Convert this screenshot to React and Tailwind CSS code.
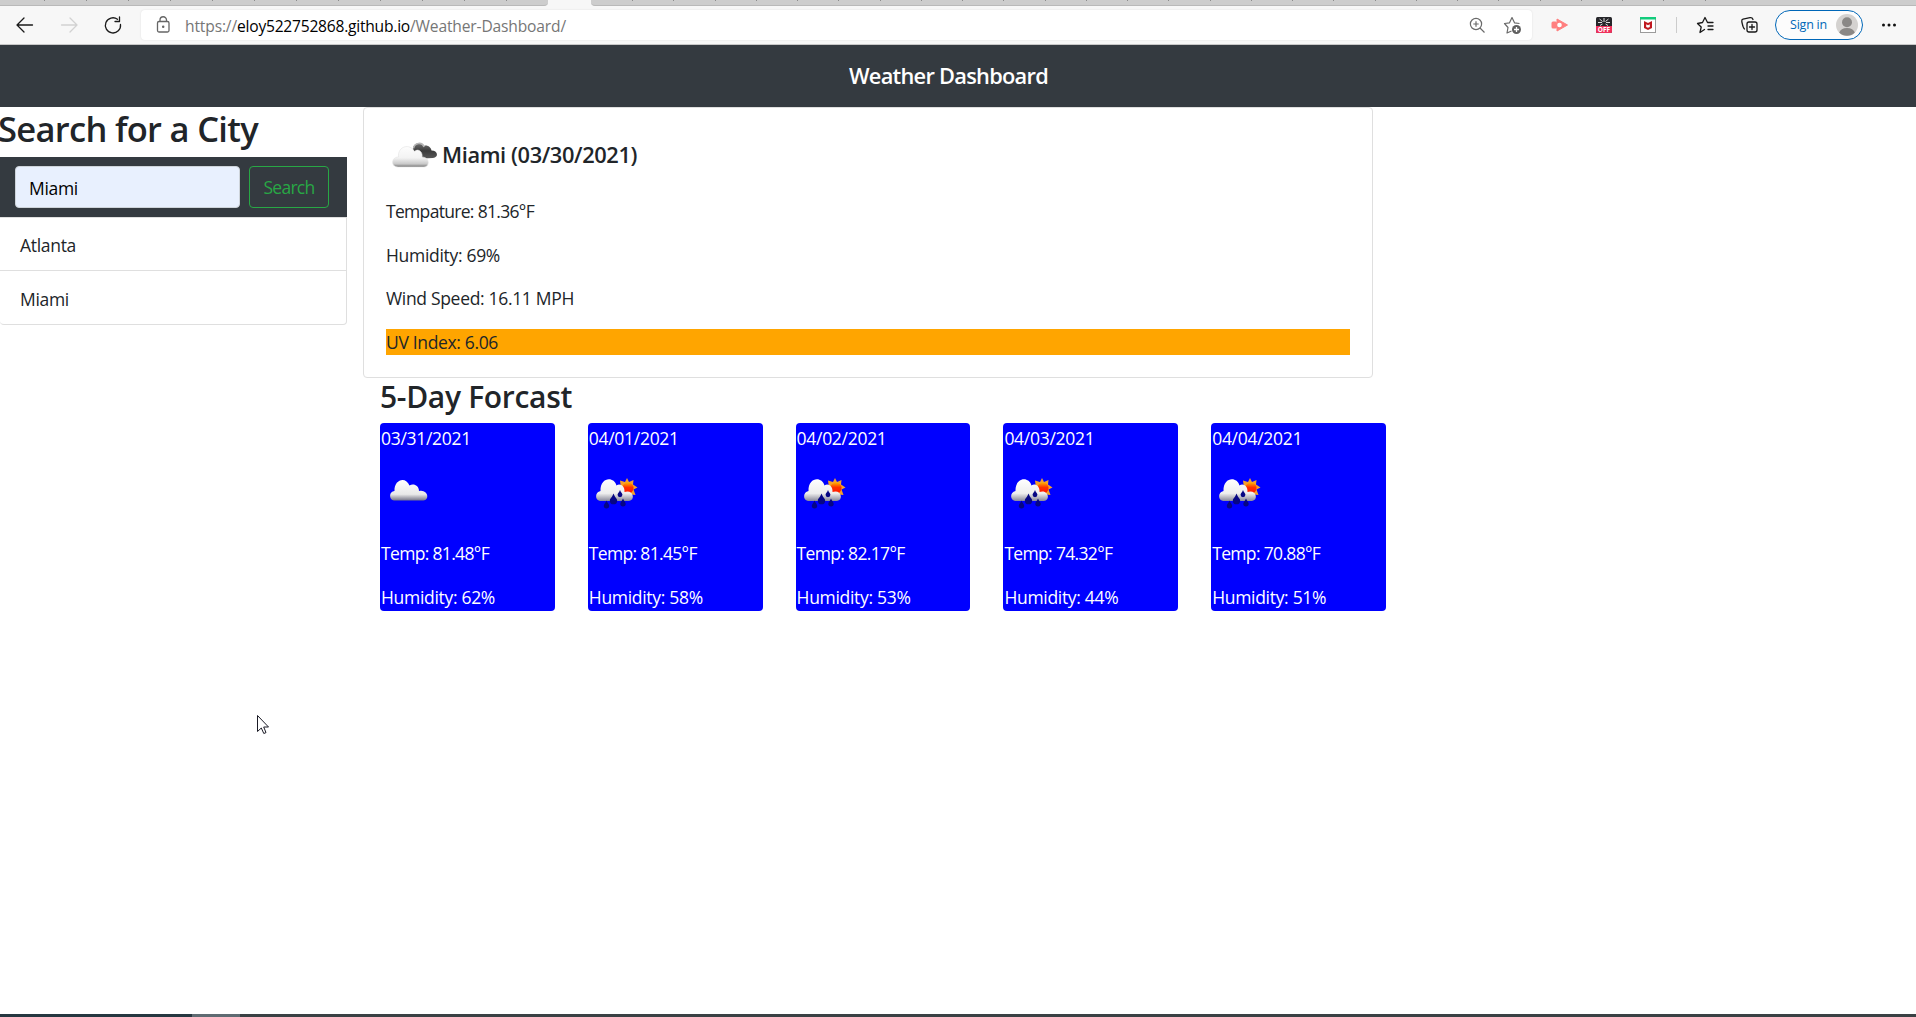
const SANS = "font-['Open_Sans','Noto_Sans',sans-serif]";

/* One line of text fitted to a given width through its letter spacing. */
function Fit({ w, children, className = "" }) {
  const fit = (el) => {
    if (!el) return;
    const apply = () => {
      el.style.letterSpacing = "0px";
      const n = el.textContent.length;
      el.style.letterSpacing = (w - el.getBoundingClientRect().width) / n + "px";
    };
    apply();
    if (document.fonts) document.fonts.ready.then(apply);
  };
  return (
    <span ref={fit} className={"inline-block whitespace-nowrap " + className}>
      {children}
    </span>
  );
}

function BrokenClouds() {
  return (
    <svg width="55" height="55" viewBox="0 0 55 55" className="shrink-0">
      <defs>
        <linearGradient id="bk" x1="0" y1="0" x2="0" y2="1">
          <stop offset="0" stopColor="#707070" />
          <stop offset="0.5" stopColor="#3c3c3c" />
          <stop offset="1" stopColor="#585858" />
        </linearGradient>
        <linearGradient id="wh" x1="0" y1="0" x2="0" y2="1">
          <stop offset="0" stopColor="#fdfdfd" />
          <stop offset="0.55" stopColor="#f3f3f3" />
          <stop offset="0.85" stopColor="#c9c9c9" />
          <stop offset="1" stopColor="#777777" />
        </linearGradient>
      </defs>
      <path d="M27 21 C26 14 35 12 38 17 C41 15.500 45 18 45.500 21.500 C52 21.500 53 28.500 47 29 L36 29.500 Z" fill="url(#bk)" />
      <path d="M27.500 19.500 C28.500 13 36.500 13 38 18" fill="none" stroke="#b5b5b5" strokeWidth="1.600" />
      <path d="M12 38 C4.500 38 5 28 12.500 28 C11.500 17 24 14 28.500 22.500 C33 18.500 37 24 36 28 C44 28 44 38 38 38 Z" fill="url(#wh)" stroke="#e2e2e2" strokeWidth="0.600" />
    </svg>
  );
}

function Cloud() {
  return (
    <svg width="55" height="55" viewBox="0 0 55 55">
      <defs>
        <linearGradient id="cl" x1="0" y1="0" x2="0" y2="1">
          <stop offset="0" stopColor="#ffffff" />
          <stop offset="0.7" stopColor="#e9e9e9" />
          <stop offset="1" stopColor="#777788" />
        </linearGradient>
      </defs>
      <path d="M13 37.500 C7.500 37 8 28 13.500 28 C13 16 25 13 28.500 22.500 C32 20 38 22 38 28 C47 26 49 37 42.500 37.500 Z" fill="url(#cl)" />
    </svg>
  );
}

function SunRain() {
  return (
    <svg width="55" height="55" viewBox="0 0 55 55">
      <defs>
        <linearGradient id="sr" x1="0" y1="0" x2="0" y2="1">
          <stop offset="0" stopColor="#ffffff" />
          <stop offset="0.65" stopColor="#eeeeee" />
          <stop offset="1" stopColor="#888899" />
        </linearGradient>
        <linearGradient id="sn" x1="0" y1="0" x2="0" y2="1">
          <stop offset="0" stopColor="#ffb400" />
          <stop offset="0.45" stopColor="#ff3000" />
          <stop offset="1" stopColor="#ff1500" />
        </linearGradient>
      </defs>
      <path d="M38 15 L40 19 L44.500 17 L44 21.500 L48.500 24.500 L44.500 26.500 L46.500 32 L42 31.500 L38 34 L35 30 L29 29 L32 25 L31 17.500 L36 19 Z" fill="#f4a12b" />
      <circle cx="39" cy="25" r="5.600" fill="url(#sn)" />
      <path d="M11 38 C5.500 37 6 29 11.500 28 C11 14 25 13 27.500 22.500 C31 20 36 23 35.500 29 C44 26 47 37 40 38 Z" fill="url(#sr)" />
      {[[17.5, 37.5, 1], [24.5, 30.5, 1.35], [31, 27, 0.9], [34, 35.500, 1]].map(([x, y, s]) => (
        <path key={x} transform={`translate(${x} ${y}) scale(${s})`} d="M0 0 C1 3 2.700 3.500 2.700 5.300 A2.700 2.700 0 0 1 -2.700 5.300 C-2.700 3.500 -1 3 0 0 Z" fill="#060684" />
      ))}
    </svg>
  );
}

function TabStrip() {
  const ticks = (n, cls) =>
    Array.from({ length: n }, (_, i) => <span key={i} className={"h-px w-px shrink-0 bg-[#8c8c8c] " + cls} />);
  return (
    <div className="flex h-[6px] shrink-0 bg-[#f7f7f7]">
      <div className="flex w-[548px] overflow-hidden rounded-br-[4px] border-b border-[#b9b9b9] bg-[#cdcdcd] pl-[44px]">{ticks(12, "mr-[41px]")}</div>
      <div className="w-[43px]" />
      <div className="flex flex-1 overflow-hidden rounded-bl-[4px] border-b border-[#b9b9b9] bg-[#cdcdcd] pl-[41px]">{ticks(27, "mr-[40.26px]")}</div>
    </div>
  );
}

function Toolbar() {
  const line = { fill: "none", stroke: "#1a1a1a", strokeWidth: 1.3, strokeLinecap: "round", strokeLinejoin: "round" };
  return (
    <div className="flex h-[39px] shrink-0 items-center border-b border-[#c8c8c8] bg-[#f7f7f7]">
      <svg width="141" height="38" viewBox="0 0 141 38">
        <g {...line}>
          <path d="M32.500 19 H17.500 M24 12 L17 19 L24 26" />
          <path d="M61.500 19 H76.500 M70 12 L77 19 L70 26" stroke="#d2d2d2" />
          <path d="M117.500 13.300 A7.600 7.600 0 1 0 120.500 18.500 M119.500 11 V15.500 H115" />
        </g>
      </svg>
      <div className="flex h-[30px] w-[1391px] items-center rounded bg-white shadow-[0_0_2px_#dddddd]">
        <svg width="44" height="30" viewBox="0 0 44 30" fill="none" stroke="#666666" strokeWidth="1.300">
          <rect x="16.500" y="11.500" width="11.500" height="10.500" rx="1.500" />
          <path d="M19 11.500 V10 A3.200 3.200 0 0 1 25.500 10 V11.500" />
          <circle cx="22.200" cy="16.700" r="0.600" fill="#666666" />
        </svg>
        <div className="flex pt-px text-[15.600px] leading-[30px] text-[#767676]">
          <Fit w={52}>https://</Fit>
          <Fit w={173} className="text-black">eloy522752868.github.io</Fit>
          <Fit w={156}>/Weather-Dashboard/</Fit>
        </div>
        <svg width="66" height="30" viewBox="0 0 66 30" className="mr-[-1px] ml-auto" fill="none" stroke="#6a6a6a" strokeWidth="1.200">
          <circle cx="9" cy="14" r="5.600" />
          <path d="M13 18 L17.500 22.500 M6.300 14 H11.700 M9 11.300 V16.700" />
          <path d="M44.500 21 L40 23 L41 17.500 L37.500 13.500 L42.500 12.800 L45 7.500 L47.500 12.800 L52.500 13.500" strokeLinejoin="round" />
          <circle cx="49.500" cy="19.500" r="4.500" fill="#606060" stroke="none" />
          <path d="M47 19.500 H52 M49.500 17 V22" stroke="white" strokeWidth="1.300" />
        </svg>
      </div>
      <svg width="243" height="38" viewBox="1532 6 243 38">
        <path d="M1557 19 L1567.500 25 L1557 31 Z" fill="#ff7f7f" stroke="#ff7f7f" strokeLinejoin="round" />
        <rect x="1551.500" y="21.500" width="5.500" height="7" rx="1.500" fill="#ff7f7f" />
        <circle cx="1559.500" cy="25" r="2.300" fill="white" />
        <rect x="1596" y="17" width="16" height="16" rx="1.500" fill="#26262a" />
        <path d="M1596 26 h16 v5.500 a1.500 1.500 0 0 1 -1.500 1.500 h-13 a1.500 1.500 0 0 1 -1.500 -1.500z" fill="#f0315c" />
        <path d="M1598 22.500 h4 M1606 22.500 h4 M1604 18 v4 M1599.500 19 l3 2.500 M1608.500 19 l-3 2.500 M1600 25.500 l2.500 -1.500 M1608 25.500 l-2.500 -1.500" stroke="#dddddd" strokeWidth="1" />
        <text x="1604" y="32" textAnchor="middle" fontSize="6.500" fontWeight="700" fontFamily="Open Sans" fill="white">OFF</text>
        <rect x="1640.500" y="17.500" width="15" height="15" fill="white" stroke="#9b9b9b" />
        <rect x="1640" y="17" width="16" height="2.500" fill="#12cc7c" />
        <path d="M1644 21 L1648 23 L1652 21 V28 L1648 30 L1644 28 Z" fill="#c01820" />
        <path d="M1646.200 24.200 L1648 25.200 L1649.800 24.200 V27 L1648 27.800 L1646.200 27 Z" fill="white" />
        <path d="M1676.500 17 V33" stroke="#cccccc" />
        <g {...line}>
          <path d="M1704.500 29.500 L1700 32.500 L1701.200 27 L1697.500 23.500 L1702.500 22.500 L1705 17.500 L1707.500 22.500 H1713 M1708 26 H1713 M1708 29.500 H1713" />
          <rect x="1747" y="22" width="10" height="10" rx="2" />
          <path d="M1749.500 27 H1754.500 M1752 24.500 V29.500 M1744.500 29 C1743 28 1743 27 1741.800 21.500 C1741.500 20 1742 19.500 1743 19.200 L1750 17.700 C1752 17.400 1752.500 18 1753 19.500" />
        </g>
      </svg>
      <div className="flex h-[30px] w-[88px] items-center justify-between rounded-full border border-[#0067b8] bg-[#fcfcfc] pr-[4px] pl-[14px] text-[12.500px] text-[#0067b8]">
        <Fit w={37}>Sign in</Fit>
        <svg width="22" height="22" viewBox="0 0 22 22">
          <circle cx="11" cy="11" r="11" fill="#d4d2d0" />
          <circle cx="11" cy="8.200" r="5" fill="#8a8886" />
          <path d="M3.200 18.600 A8 6 0 0 1 18.800 18.600 A11 11 0 0 1 3.200 18.600Z" fill="#8a8886" />
        </svg>
      </div>
      <svg width="53" height="38" viewBox="0 0 53 38" fill="#111111">
        <circle cx="20.500" cy="19" r="1.500" />
        <circle cx="26" cy="19" r="1.500" />
        <circle cx="31.500" cy="19" r="1.500" />
      </svg>
    </div>
  );
}

const days = [
  ["03/31/2021", "81.48", "62"],
  ["04/01/2021", "81.45", "58"],
  ["04/02/2021", "82.17", "53"],
  ["04/03/2021", "74.32", "44"],
  ["04/04/2021", "70.88", "51"],
];

export default function App() {
  return (
    <div className={`relative flex h-[1017px] w-[1916px] flex-col overflow-hidden bg-white text-[17.500px] leading-[26.400px] text-[#212529] ${SANS}`}>
      <TabStrip />
      <Toolbar />
      <header className="flex h-[62px] shrink-0 items-center justify-center bg-[#343a40] pr-[19px] text-[21.800px] font-semibold text-white">
        <Fit w={199}>Weather Dashboard</Fit>
      </header>

      <main className="flex flex-1 items-start">
        <aside className="w-[347px]">
          <h1 className="-ml-[2px] pt-px text-[34.500px] leading-[42px] font-semibold">
            <Fit w={260}>Search for a City</Fit>
          </h1>
          <div className="mt-[7px] flex h-[60px] items-center gap-[9px] bg-[#343a40] pl-[15px]">
            <div className="flex h-[42px] w-[225px] items-center rounded border border-[#ced4da] bg-[#e8f0fe] pt-[2px] pl-[13px] text-black">
              <Fit w={49}>Miami</Fit>
            </div>
            <button className="h-[42px] w-[80px] rounded border border-[#28a745] pt-px text-[#28a745]">
              <Fit w={51}>Search</Fit>
            </button>
          </div>
          <ul className="h-[108px] rounded-b border border-l-0 border-[#dfdfdf]">
            <li className="flex h-[53px] items-center border-b border-[#dfdfdf] pt-[2px] pl-[20px]"><Fit w={56}>Atlanta</Fit></li>
            <li className="flex h-[53px] items-center pt-[3px] pl-[20px]"><Fit w={49}>Miami</Fit></li>
          </ul>
        </aside>

        <section className="ml-[16px] w-[1023px]">
          <div className="h-[271px] w-[1010px] rounded border border-[#dfdfdf] px-[22px] pt-[21px]">
            <h2 className="flex h-[55px] items-center text-[21.800px] font-semibold">
              <BrokenClouds />
              <Fit w={195} className="-mt-[2px] ml-px">Miami (03/30/2021)</Fit>
            </h2>
            <div className="mt-[14px] flex flex-col gap-[17.300px]">
              <p className="h-[26.400px]"><Fit w={148}>Tempature: 81.36°F</Fit></p>
              <p className="h-[26.400px]"><Fit w={114}>Humidity: 69%</Fit></p>
              <p className="h-[26.400px]"><Fit w={188}>Wind Speed: 16.11 MPH</Fit></p>
              <p className="h-[26.400px] bg-[#ffa500]"><Fit w={112}>UV Index: 6.06</Fit></p>
            </div>
          </div>
          <h3 className="ml-[17px] h-[45px] text-[30px] leading-[37px] font-semibold">
            <Fit w={192}>5-Day Forcast</Fit>
          </h3>
          <div className="ml-[17px] flex w-[1006px] justify-between text-white">
            {days.map(([date, temp, hum], i) => (
              <div key={date} className="h-[188px] w-[174.800px] rounded bg-[#0000ff] pt-[2px] pl-px">
                <p><Fit w={90}>{date}</Fit></p>
                <div className="mt-[12px] h-[77px]">{i === 0 ? <Cloud /> : <SunRain />}</div>
                <p><Fit w={108}>{`Temp: ${temp}°F`}</Fit></p>
                <p className="mt-[17px]"><Fit w={114}>{`Humidity: ${hum}%`}</Fit></p>
              </div>
            ))}
          </div>
        </section>
      </main>

      <footer className="flex h-[3px] bg-[#3a4144]">
        <div className="w-[192px] bg-[#263740]" />
        <div className="w-[48px] bg-[#5f6b72]" />
      </footer>

      <svg className="absolute top-[714px] left-[256px]" width="16" height="22" viewBox="0 0 16 22">
        <path d="M1.500 1.500 V17.500 L5.300 14 L7.800 19.500 L10 18.600 L7.700 13 H12.500 Z" fill="white" stroke="#1b1b26" strokeWidth="1" />
      </svg>
    </div>
  );
}
